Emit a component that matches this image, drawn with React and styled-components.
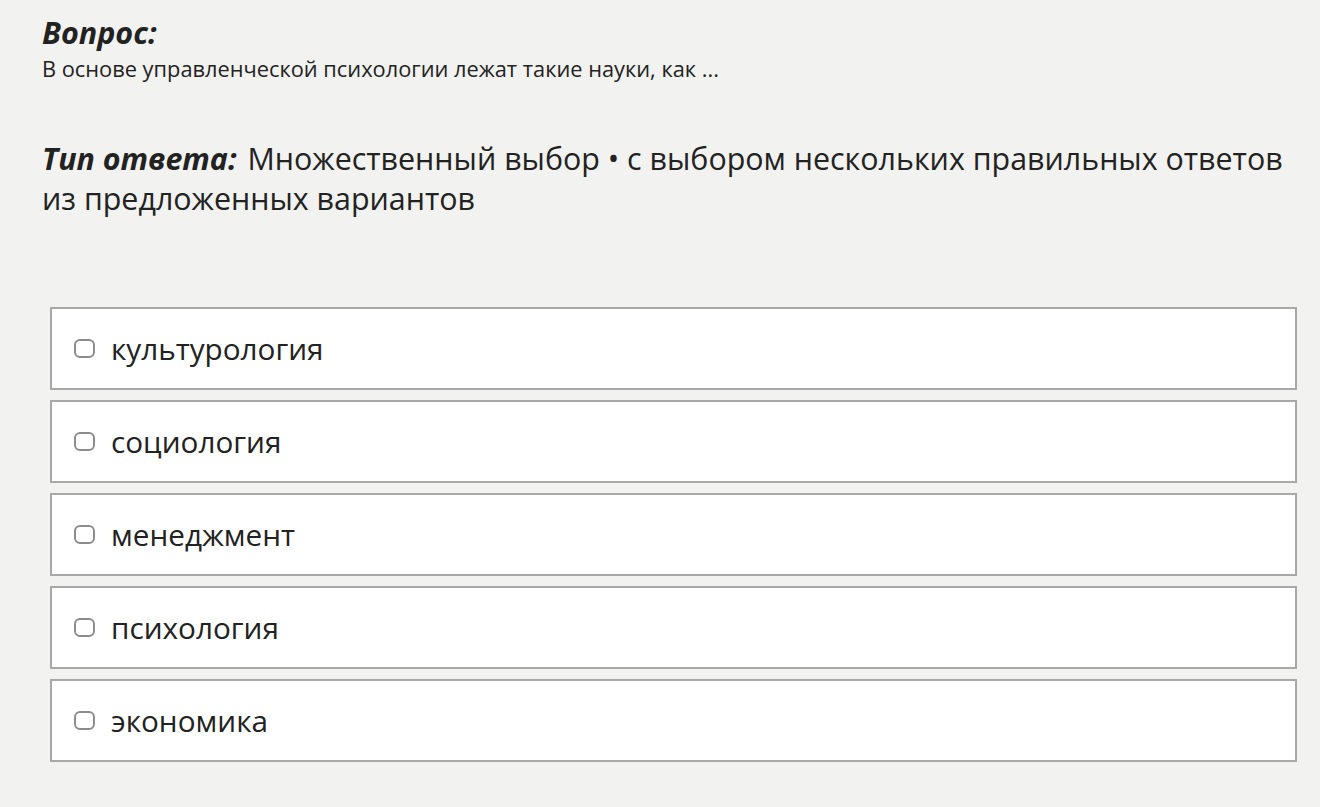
import React from "react";
import styled, { createGlobalStyle } from "styled-components";

const Global = createGlobalStyle`
  html, body { margin: 0; padding: 0; background: #f2f2f0; }
  body { font-family: "Open Sans", "Noto Sans", sans-serif; color: #222; }
`;

const Page = styled.div`
  width: 1320px;
  height: 807px;
  box-sizing: border-box;
  padding: 12px 0 0 42px;
  background: #f2f2f0;
  overflow: hidden;
`;

const Title = styled.div`
  font-size: 30.5px;
  font-weight: 700;
  font-style: italic;
  line-height: 40px;
`;

const Question = styled.div`
  font-size: 21.8px;
  line-height: 28px;
  margin-top: 3px;
`;

const TypeLine = styled.div`
  margin-top: 56px;
  font-size: 30.4px;
  line-height: 40px;
  width: 1250px;
`;

const TypeLabel = styled.span`
  font-weight: 700;
  font-style: italic;
  margin-right: 3px;
`;

const List = styled.div`
  margin: 88px 0 0 8px;
  width: 1247px;
  display: flex;
  flex-direction: column;
  gap: 10px;
`;

const Option = styled.label`
  display: flex;
  align-items: center;
  gap: 16px;
  height: 83px;
  box-sizing: border-box;
  padding-left: 22px;
  background: #fff;
  border: 2px solid #a8a8a8;
  font-size: 29.7px;
  cursor: pointer;
`;

const Box = styled.span`
  width: 21px;
  height: 19px;
  box-sizing: border-box;
  border: 2px solid #8c8c8c;
  border-radius: 6px;
  flex-shrink: 0;
`;

const Text = styled.span``;

const options = ["культурология", "социология", "менеджмент", "психология", "экономика"];

export default function App() {
  return (
    <>
      <Global />
      <Page>
        <Title>Вопрос:</Title>
        <Question>В основе управленческой психологии лежат такие науки, как ...</Question>
        <TypeLine>
          <TypeLabel>Тип ответа:</TypeLabel> Множественный выбор • с выбором нескольких правильных ответов из предложенных вариантов
        </TypeLine>
        <List>
          {options.map((o) => (
            <Option key={o}>
              <Box />
              <Text>{o}</Text>
            </Option>
          ))}
        </List>
      </Page>
    </>
  );
}
